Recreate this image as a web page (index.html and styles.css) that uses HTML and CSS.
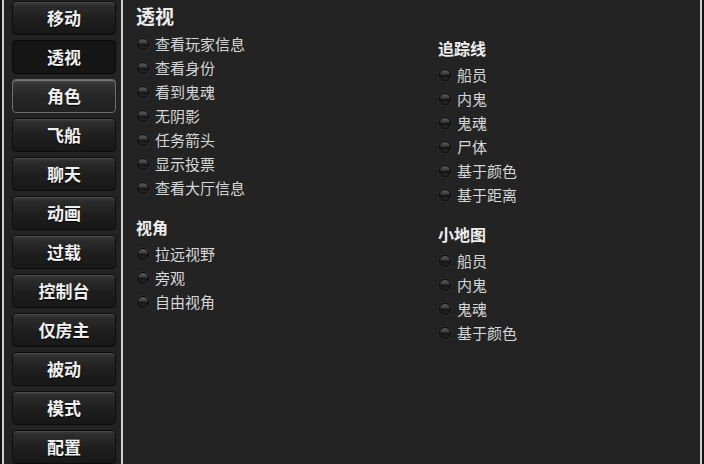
FILE: index.html
```html
<!DOCTYPE html>
<html lang="zh">
<head>
<meta charset="utf-8">
<link rel="stylesheet" href="styles.css">
</head>
<body>
<div class="frame">
  <nav class="sidebar">
    <div class="btn">移动</div>
    <div class="btn active">透视</div>
    <div class="btn hover">角色</div>
    <div class="btn">飞船</div>
    <div class="btn">聊天</div>
    <div class="btn">动画</div>
    <div class="btn">过载</div>
    <div class="btn">控制台</div>
    <div class="btn">仅房主</div>
    <div class="btn">被动</div>
    <div class="btn">模式</div>
    <div class="btn">配置</div>
  </nav>
  <main class="content">
    <h1 class="title">透视</h1>
    <div class="cols">
      <div class="col">
        <ul class="list">
          <li><span class="cb"></span>查看玩家信息</li>
          <li><span class="cb"></span>查看身份</li>
          <li><span class="cb"></span>看到鬼魂</li>
          <li><span class="cb"></span>无阴影</li>
          <li><span class="cb"></span>任务箭头</li>
          <li><span class="cb"></span>显示投票</li>
          <li><span class="cb"></span>查看大厅信息</li>
        </ul>
        <h2 class="head">视角</h2>
        <ul class="list">
          <li><span class="cb"></span>拉远视野</li>
          <li><span class="cb"></span>旁观</li>
          <li><span class="cb"></span>自由视角</li>
        </ul>
      </div>
      <div class="col col-right">
        <h2 class="head first">追踪线</h2>
        <ul class="list">
          <li><span class="cb"></span>船员</li>
          <li><span class="cb"></span>内鬼</li>
          <li><span class="cb"></span>鬼魂</li>
          <li><span class="cb"></span>尸体</li>
          <li><span class="cb"></span>基于颜色</li>
          <li><span class="cb"></span>基于距离</li>
        </ul>
        <h2 class="head">小地图</h2>
        <ul class="list">
          <li><span class="cb"></span>船员</li>
          <li><span class="cb"></span>内鬼</li>
          <li><span class="cb"></span>鬼魂</li>
          <li><span class="cb"></span>基于颜色</li>
        </ul>
      </div>
    </div>
  </main>
</div>
</body>
</html>
```

FILE: styles.css
```css
* { box-sizing: border-box; }
html, body {
  margin: 0;
  padding: 0;
  background: #111;
  width: 704px;
  height: 464px;
  overflow: hidden;
  font-family: "Noto Sans CJK SC", "Noto Sans", sans-serif;
}
.frame {
  margin-left: 2px;
  width: 700px;
  height: 464px;
  display: flex;
  background: #232323;
  border-left: 2px solid #cfcfcf;
  border-right: 2px solid #cfcfcf;
}
.sidebar {
  width: 119px;
  flex: none;
  padding: 1px 0 0 8px;
  display: flex;
  flex-direction: column;
  gap: 5px;
  border-right: 2px solid #d0d0d0;
}
.btn {
  width: 104px;
  height: 34px;
  flex: none;
  border-radius: 4px;
  border: 1px solid #0c0c0c;
  background: linear-gradient(#3e3e3e 0%, #2c2c2c 12%, #1e1e1e 55%, #181818 100%);
  box-shadow: inset 0 1px 0 #4a4a4a;
  color: #f0f0f0;
  font-weight: 700;
  font-size: 17px;
  line-height: 32px;
  text-align: center;
  text-shadow: 0 1px 1px #000;
}
.btn.active {
  background: #151515;
  box-shadow: none;
  border-color: #0a0a0a;
}
.btn.hover {
  border-color: #6c6c6c;
  background: linear-gradient(#4a4a4a 0%, #333 14%, #262626 55%, #202020 100%);
  box-shadow: inset 0 1px 0 #777;
}
.content {
  flex: 1;
  padding: 3px 0 0 13px;
  color: #dcdcdc;
}
.title {
  margin: 0 0 4px;
  font-size: 19px;
  font-weight: 700;
  line-height: 25px;
  color: #eeeeee;
}
.cols {
  display: grid;
  grid-template-columns: 302px 1fr;
}
.col-right { padding-top: 4px; }
.head {
  margin: 15px 0 3px;
  font-size: 16px;
  font-weight: 700;
  line-height: 24px;
  color: #eeeeee;
}
.head.first { margin-top: 0; }
.list {
  list-style: none;
  margin: 0;
  padding: 0;
}
.list li {
  height: 24px;
  line-height: 24px;
  font-size: 15px;
  display: flex;
  align-items: center;
  color: #d6d6d6;
}
.cb {
  width: 12px;
  height: 12px;
  margin: 0 6px 0 1px;
  border-radius: 6px;
  border: 1px solid #080808;
  background: linear-gradient(#5c5c5c 0%, #3c3c3c 42%, #161616 50%, #262626 100%);
  box-shadow: 0 0 0 1px #2e2e2e;
  flex: none;
}
```
